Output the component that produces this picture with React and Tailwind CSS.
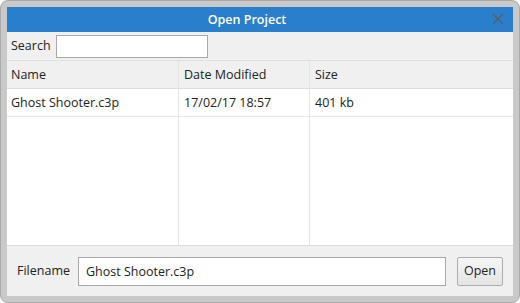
const files = [{ name: "Ghost Shooter.c3p", date: "17/02/17 18:57", size: "401 kb" }];

const Column = ({ title, values, width, pad, last }) => (
  <div className={`flex flex-col ${width} ${last ? "" : "border-r border-[#e3e3e3]"}`}>
    <div className={`flex h-[28px] items-center border-b border-[#dedede] bg-[#f0f0f0] pt-[1px] ${pad}`}>{title}</div>
    {values.map((v, i) => (
      <div key={i} className={`flex h-[28px] items-center border-b border-[#e6e6e6] bg-white pt-[1px] ${pad}`}>
        {v}
      </div>
    ))}
    <div className="flex-1 bg-white" />
  </div>
);

export default function App() {
  return (
    <div
      className="h-[303px] w-[520px] rounded-[8px] border border-[#aaaaaa] bg-[#c9c9c9] p-[6px] text-[12.5px] text-[#222]"
      style={{ fontFamily: '"Open Sans", "Noto Sans", sans-serif' }}
    >
      <div className="flex h-full flex-col bg-[#f0f0f0]">
        <div className="relative h-[25px] bg-[#2a7fcc] pr-[26px] text-center text-[12.5px] font-semibold leading-[25px] text-white">
          Open Project
          <svg className="absolute right-[9px] top-[6px]" width="12" height="12" viewBox="0 0 12 12">
            <path d="M1 1 L11 11 M11 1 L1 11" stroke="#55606c" strokeWidth="1.6" />
          </svg>
        </div>

        <div className="flex h-[28px] items-center pl-[4px] pt-[1px]">
          <span className="w-[45px]">Search</span>
          <input className="h-[23px] w-[152px] border border-[#a9a9a9] bg-white px-1 outline-none" />
        </div>

        <div className="flex h-[185px] border-t border-[#e0e0e0]">
          <Column title="Name" width="w-[172px]" pad="pl-[4px]" values={files.map((f) => f.name)} />
          <Column title="Date Modified" width="w-[131px]" pad="pl-[5px]" values={files.map((f) => f.date)} />
          <Column title="Size" width="flex-1" pad="pl-[5px]" values={files.map((f) => f.size)} last />
        </div>

        <div className="flex flex-1 items-center border-t border-[#dcdcdc] pl-[10px] pr-[10px]">
          <span className="w-[61px]">Filename</span>
          <input
            defaultValue="Ghost Shooter.c3p"
            className="h-[29px] w-[368px] border border-[#a9a9a9] bg-white px-[7px] outline-none"
          />
          <button className="ml-[11px] h-[29px] w-[46px] rounded-[2px] border border-[#adadad] bg-gradient-to-b from-[#f6f6f6] to-[#e4e4e4] text-[#222]">
            Open
          </button>
        </div>
      </div>
    </div>
  );
}
